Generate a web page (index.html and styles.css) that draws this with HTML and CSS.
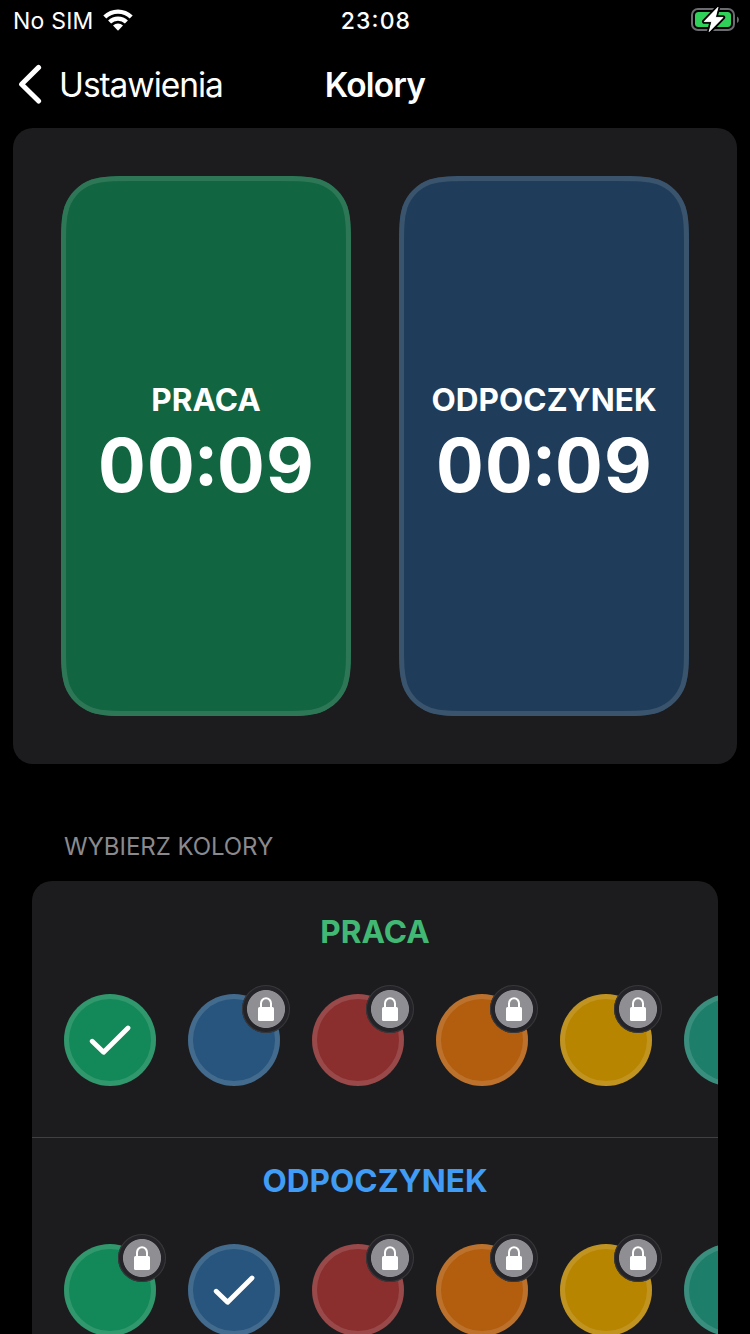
FILE: index.html
```html
<!DOCTYPE html>
<html lang="pl">
<head>
<meta charset="utf-8">
<title>Kolory</title>
<link rel="stylesheet" href="styles.css">
</head>
<body>
<svg class="defs" width="0" height="0" aria-hidden="true">
  <defs>
    <path id="device" d="M73.4 0H216.6C237.8 0 248.3 0 259.7 3.6C272.1 8.1 281.9 17.9 286.4 30.3C290 41.7 290 52.2 290 73.4V466.6C290 487.8 290 498.3 286.4 509.7C281.9 522.1 272.1 531.9 259.7 536.4C248.3 540 237.8 540 216.6 540H73.4C52.2 540 41.7 540 30.3 536.4C17.9 531.9 8.1 522.1 3.6 509.7C0 498.3 0 487.8 0 466.6V73.4C0 52.2 0 41.7 3.6 30.3C8.1 17.9 17.9 8.1 30.3 3.6C41.7 0 52.2 0 73.4 0Z"/>
    <clipPath id="device-clip"><use href="#device"/></clipPath>
    <symbol id="lock" viewBox="0 0 16 24">
      <path d="M3 12V6.5a5 5.3 0 0 1 10 0V12" fill="none" stroke="#fff" stroke-width="2"/>
      <rect x="0" y="10" width="16" height="14" rx="1.6" fill="#fff"/>
    </symbol>
    <symbol id="check" viewBox="0 0 42 32">
      <path d="M3.2 17.2L14.6 28.3L39 4" fill="none" stroke="#fff" stroke-width="4.8" stroke-linecap="round" stroke-linejoin="round"/>
    </symbol>
  </defs>
</svg>

<header class="status">
  <div class="carrier">
    <span class="carrier-name">No SIM</span>
    <svg class="wifi" width="30" height="22" viewBox="0 0 30 22" fill="#fff">
      <path d="M0.3 6.6A20.8 20.8 0 0 1 29.7 6.6L26.7 9.6A16.5 16.5 0 0 0 3.3 9.6Z"/>
      <path d="M5.1 11.6A14 14 0 0 1 24.9 11.6L21.9 14.6A9.8 9.8 0 0 0 8.1 14.6Z"/>
      <path d="M10 16.6A7.1 7.1 0 0 1 20 16.6L15 21.8Z"/>
    </svg>
  </div>
  <span class="clock">23:08</span>
  <svg class="battery" width="50" height="28" viewBox="0 0 50 28">
    <rect x="2" y="3" width="42" height="21" rx="6" fill="none" stroke="#6c6c70" stroke-width="2"/>
    <rect x="5" y="6" width="36" height="15" rx="3.5" fill="#30d158"/>
    <path d="M47 10.5v6.4a3.6 3.6 0 0 0 0-6.4Z" fill="#6c6c70"/>
    <path d="M28 1.3L14.2 15.6H21.8L19.2 25.6L33 11.4H25.4Z" fill="#fff" stroke="#000" stroke-width="4.4" stroke-linejoin="round" paint-order="stroke"/>
    <path d="M28 1.3L14.2 15.6H21.8L19.2 25.6L33 11.4H25.4Z" fill="#fff" stroke="#fff" stroke-width="0.8" stroke-linejoin="round"/>
  </svg>
</header>

<nav class="nav">
  <a class="back">
    <svg width="24" height="40" viewBox="0 0 24 40"><path d="M20.6 3.4L3.6 20.2L20.6 37" fill="none" stroke="#fff" stroke-width="5" stroke-linecap="round" stroke-linejoin="round"/></svg>
    <span class="back-label">Ustawienia</span>
  </a>
  <h1 class="title">Kolory</h1>
</nav>

<main>
  <section class="preview">
    <div class="device work">
      <svg class="device-shape" width="290" height="540"><use href="#device" clip-path="url(#device-clip)"/></svg>
      <span class="label">PRACA</span>
      <span class="timer">00:09</span>
    </div>
    <div class="device rest">
      <svg class="device-shape" width="290" height="540"><use href="#device" clip-path="url(#device-clip)"/></svg>
      <span class="label">ODPOCZYNEK</span>
      <span class="timer">00:09</span>
    </div>
  </section>

  <h2 class="caption">WYBIERZ KOLORY</h2>

  <section class="picker">
    <div class="group group-work">
      <h3 class="label">PRACA</h3>
      <div class="swatches">
        <div class="swatch green"><svg class="check"><use href="#check"/></svg></div>
        <div class="swatch blue"><span class="badge"><svg class="lock"><use href="#lock"/></svg></span></div>
        <div class="swatch red"><span class="badge"><svg class="lock"><use href="#lock"/></svg></span></div>
        <div class="swatch orange"><span class="badge"><svg class="lock"><use href="#lock"/></svg></span></div>
        <div class="swatch yellow"><span class="badge"><svg class="lock"><use href="#lock"/></svg></span></div>
        <div class="swatch teal"></div>
      </div>
    </div>
    <div class="group group-rest">
      <h3 class="label">ODPOCZYNEK</h3>
      <div class="swatches">
        <div class="swatch green"><span class="badge"><svg class="lock"><use href="#lock"/></svg></span></div>
        <div class="swatch blue"><svg class="check"><use href="#check"/></svg></div>
        <div class="swatch red"><span class="badge"><svg class="lock"><use href="#lock"/></svg></span></div>
        <div class="swatch orange"><span class="badge"><svg class="lock"><use href="#lock"/></svg></span></div>
        <div class="swatch yellow"><span class="badge"><svg class="lock"><use href="#lock"/></svg></span></div>
        <div class="swatch teal"></div>
      </div>
    </div>
  </section>
</main>
</body>
</html>
```
FILE: styles.css
```css
* { box-sizing: border-box; margin: 0; padding: 0; }
html, body { height: 1334px; overflow: hidden; }
body {
  background: #000;
  color: #fff;
  font-family: Inter, "Liberation Sans", sans-serif;
  display: flex;
  flex-direction: column;
}
svg { display: block; flex: none; }
.defs { position: absolute; }

.status {
  display: grid;
  grid-template-columns: 1fr auto 1fr;
  align-items: center;
  height: 40px;
  padding: 0 10px 0 13px;
  font-size: 23px;
  line-height: 40px;
}
.carrier { display: flex; align-items: center; gap: 9px; }
.carrier-name { letter-spacing: 0.2px; padding-top: 2px; line-height: 38px; }
.clock { font-weight: 550; font-size: 23px; letter-spacing: 1.1px; padding: 2px 1px 0 0; line-height: 38px; font-feature-settings: "case" 1; }
.battery { justify-self: end; }

.nav {
  display: grid;
  grid-template-columns: 1fr auto 1fr;
  align-items: center;
  height: 88px;
  padding: 0 18px;
  font-size: 33.5px;
  line-height: 88px;
}
.back { display: flex; align-items: center; gap: 17px; }
.back-label { letter-spacing: -1.05px; padding-top: 2px; line-height: 86px; }
.title { grid-column: 2; font-size: 33.5px; font-weight: 620; letter-spacing: -0.8px; padding-top: 2px; line-height: 86px; }

.preview {
  display: flex;
  justify-content: space-between;
  margin: 0 13px;
  padding: 48px;
  height: 636px;
  border-radius: 20px;
  background: #1c1c1e;
}
.device {
  position: relative;
  width: 290px;
  height: 540px;
  display: flex;
  flex-direction: column;
  align-items: center;
  padding-top: 204px;
}
.device-shape { position: absolute; inset: 0; stroke-width: 10px; }
.work .device-shape { fill: #116541; stroke: #2d7757; }
.rest .device-shape { fill: #1f3d5a; stroke: #3a546e; }
.device > span { position: relative; }
.label { font-size: 31.5px; line-height: 39px; padding-bottom: 1px; font-weight: 670; letter-spacing: 0.05px; }
.timer { font-size: 74px; line-height: 90px; font-weight: 700; font-variant-numeric: tabular-nums; font-feature-settings: "case" 1; letter-spacing: 1.2px; padding-left: 1px; }

.caption {
  margin: 67px 0 0 64px;
  font-size: 24px;
  line-height: 32px;
  font-weight: 400;
  letter-spacing: -0.05px;
  color: #8a8a8e;
}

.picker {
  flex: 1;
  margin: 18px 32px 0;
  border-radius: 20px 20px 0 0;
  background: #1c1c1e;
  overflow: hidden;
}
.group { display: flex; flex-direction: column; align-items: center; }
.group-work { height: 257px; padding-top: 31px; border-bottom: 1px solid #404043; gap: 42.4px; }
.group-rest { padding-top: 23px; gap: 43px; }
.group-work .label { color: #41b873; }
.group-rest .label { color: #409cf4; }

.swatches { display: flex; gap: 32px; align-self: flex-start; padding-left: 32px; }
.swatch {
  position: relative;
  display: grid;
  place-items: center;
  flex: none;
  width: 92px;
  height: 92px;
  border-radius: 50%;
  background: var(--tone);
  box-shadow: inset 0 0 0 5px rgba(255, 255, 255, 0.13);
}
.green { --tone: #138858; }
.blue { --tone: #28557d; }
.red { --tone: #8a2e2e; }
.orange { --tone: #b25e0e; }
.yellow { --tone: #b88500; }
.teal { --tone: #1d7e6a; }

.check { width: 42px; height: 32px; }
.badge {
  position: absolute;
  top: -10px;
  right: -10px;
  display: grid;
  place-items: center;
  width: 48px;
  height: 48px;
  border-radius: 50%;
  background: radial-gradient(circle, #8e8e93 18.6px, #242428 19.4px);
  box-shadow: inset 0 0 0 1px #38383b;
}
.group-work .badge { top: -9px; }
.lock { width: 16px; height: 24px; }
```
